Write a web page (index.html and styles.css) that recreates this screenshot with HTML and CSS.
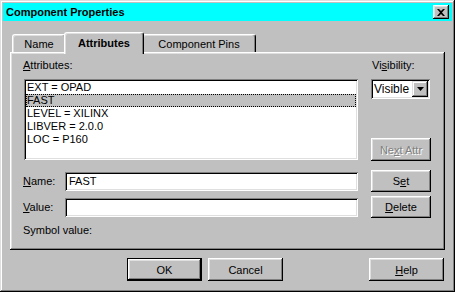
FILE: index.html
```html
<!DOCTYPE html>
<html>
<head>
  <title>Component Properties</title>
  <link rel="stylesheet" href="styles.css">
</head>
<body>
  <div class="window">
    <div class="titlebar">
      <span class="title">Component Properties</span>
      <div class="close-btn">
        <svg width="8" height="7" viewBox="0 0 8 7"><path d="M0 0h2l2 2 2-2h2L5 3.5 8 7H6L4 5 2 7H0l3-3.5z" fill="#000"/></svg>
      </div>
    </div>

    <div class="dialog">
      <div class="tabs">
        <div class="tab tab-name">Name</div>
        <div class="tab tab-attrs active">Attributes</div>
        <div class="tab tab-pins">Component Pins</div>
      </div>

      <div class="panel">
        <div class="attr-row">
          <div class="attr-left">
            <div class="label"><u>A</u>ttributes:</div>
            <div class="listbox">
              <div class="item">EXT = OPAD</div>
              <div class="item selected">FAST</div>
              <div class="item">LEVEL = XILINX</div>
              <div class="item">LIBVER = 2.0.0</div>
              <div class="item">LOC = P160</div>
            </div>
          </div>
          <div class="attr-right">
            <div class="label">Vi<u>s</u>ibility:</div>
            <div class="select">
              <span class="select-text">Visible</span>
              <span class="drop-btn">
                <svg width="7" height="4" viewBox="0 0 7 4"><path d="M0 0h7L3.5 4z" fill="#000"/></svg>
              </span>
            </div>
            <div class="btn side-btn disabled">Ne<u>x</u>t Attr</div>
          </div>
        </div>

        <div class="field-row name-row">
          <div class="field-label"><u>N</u>ame:</div>
          <div class="textbox">FAST</div>
          <div class="btn side-btn">S<u>e</u>t</div>
        </div>

        <div class="field-row value-row">
          <div class="field-label"><u>V</u>alue:</div>
          <div class="textbox"></div>
          <div class="btn side-btn"><u>D</u>elete</div>
        </div>

        <div class="symbol">Symbol value:</div>
      </div>

      <div class="buttons">
        <div class="btn wide default">OK</div>
        <div class="btn wide">Cancel</div>
        <div class="btn wide help"><u>H</u>elp</div>
      </div>
    </div>
  </div>
</body>
</html>
```

FILE: styles.css
```css
body {
  margin: 0;
  font-family: "Liberation Sans", Arial, sans-serif;
  font-size: 11px;
  color: #000;
  background: #c0c0c0;
}

.window {
  width: 455px;
  height: 292px;
  box-sizing: border-box;
  padding: 3px;
  background: #c0c0c0;
  box-shadow: inset -1px -1px #000, inset 1px 1px #dfdfdf,
              inset -2px -2px #808080, inset 2px 2px #fff;
}

/* title bar */
.titlebar {
  height: 18px;
  background: #00ffff;
  display: flex;
  align-items: center;
  justify-content: space-between;
  padding: 0 3px;
}

.title {
  font-weight: bold;
  font-size: 11px;
}

.close-btn {
  width: 16px;
  height: 14px;
  display: flex;
  align-items: center;
  justify-content: center;
  background: #c0c0c0;
  box-shadow: inset -1px -1px #000, inset 1px 1px #fff,
              inset -2px -2px #808080, inset 2px 2px #dfdfdf;
}

.dialog {
  padding: 0 7px;
}

/* tabs */
.tabs {
  display: flex;
  align-items: flex-end;
  height: 20px;
  margin-top: 11px;
  padding-left: 2px;
}

.tab {
  height: 18px;
  box-sizing: border-box;
  display: flex;
  align-items: center;
  justify-content: center;
  background: #c0c0c0;
  border-radius: 3px 3px 0 0;
  border-top: 1px solid #fff;
  border-left: 1px solid #fff;
  border-right: 1px solid #000;
  box-shadow: inset -1px 0 #808080, inset 1px 1px #dfdfdf;
  padding-top: 1px;
}

.tab-name { width: 54px; }
.tab-attrs { width: 80px; }
.tab-pins { width: 114px; }

.tab.active {
  height: 22px;
  margin: 0 -2px -2px;
  position: relative;
  z-index: 1;
  font-weight: bold;
  padding-bottom: 3px;
}

.tab-name { margin-right: 0; }

/* panel */
.panel {
  height: 198px;
  box-sizing: border-box;
  padding: 7px 13px 0;
  box-shadow: inset -1px -1px #000, inset 1px 1px #fff,
              inset -2px -2px #808080, inset 2px 2px #dfdfdf;
}

.label {
  line-height: 13px;
}

.attr-row {
  display: flex;
  gap: 13px;
}

.attr-left {
  width: 335px;
}

.listbox {
  margin: 7px 0 0 1px;
  height: 81px;
  box-sizing: border-box;
  padding: 2px 2px;
  background: #fff;
  box-shadow: inset 1px 1px #808080, inset -1px -1px #fff,
              inset 2px 2px #000, inset -2px -2px #dfdfdf;
}

.item {
  height: 13px;
  line-height: 13px;
  padding-left: 1px;
}

.item.selected {
  background: #c0c0c0;
  outline: 1px dotted #000;
  outline-offset: -1px;
}

.attr-right {
  width: 60px;
  display: flex;
  flex-direction: column;
}

.attr-right .label {
  padding-left: 1px;
}

.select {
  margin-top: 7px;
  width: 59px;
  height: 20px;
  box-sizing: border-box;
  padding: 2px;
  display: flex;
  align-items: center;
  background: #fff;
  box-shadow: inset 1px 1px #808080, inset -1px -1px #fff,
              inset 2px 2px #000, inset -2px -2px #dfdfdf;
}

.select-text {
  flex: 1;
  padding-left: 1px;
  font-size: 12px;
}

.drop-btn {
  width: 16px;
  height: 16px;
  display: flex;
  align-items: center;
  justify-content: center;
  background: #c0c0c0;
  box-shadow: inset -1px -1px #000, inset 1px 1px #dfdfdf,
              inset -2px -2px #808080, inset 2px 2px #fff;
}

/* buttons */
.btn {
  box-sizing: border-box;
  display: flex;
  align-items: center;
  justify-content: center;
  background: #c0c0c0;
  box-shadow: inset -1px -1px #000, inset 1px 1px #fff,
              inset -2px -2px #808080, inset 2px 2px #dfdfdf;
}

.side-btn {
  width: 60px;
  height: 22px;
}

.attr-right .side-btn {
  margin-top: auto;
  height: 23px;
  margin-bottom: -1px;
}

.btn.disabled {
  color: #808080;
  text-shadow: 1px 1px #fff;
}

.field-row {
  display: flex;
  align-items: center;
}

.name-row { margin-top: 10px; }
.value-row { margin-top: 4px; }

.field-label {
  width: 42px;
}

.textbox {
  width: 293px;
  height: 19px;
  box-sizing: border-box;
  padding: 2px 4px;
  line-height: 15px;
  margin-right: 13px;
  background: #fff;
  box-shadow: inset 1px 1px #808080, inset -1px -1px #fff,
              inset 2px 2px #000, inset -2px -2px #dfdfdf;
}

.symbol {
  margin-top: 6px;
  line-height: 13px;
}

.buttons {
  display: flex;
  margin-top: 8px;
  padding-left: 117px;
  gap: 6px;
}

.wide {
  width: 75px;
  height: 23px;
}

.btn.default {
  border: 1px solid #000;
}

.btn.help {
  margin-left: auto;
  margin-right: 1px;
}
```
